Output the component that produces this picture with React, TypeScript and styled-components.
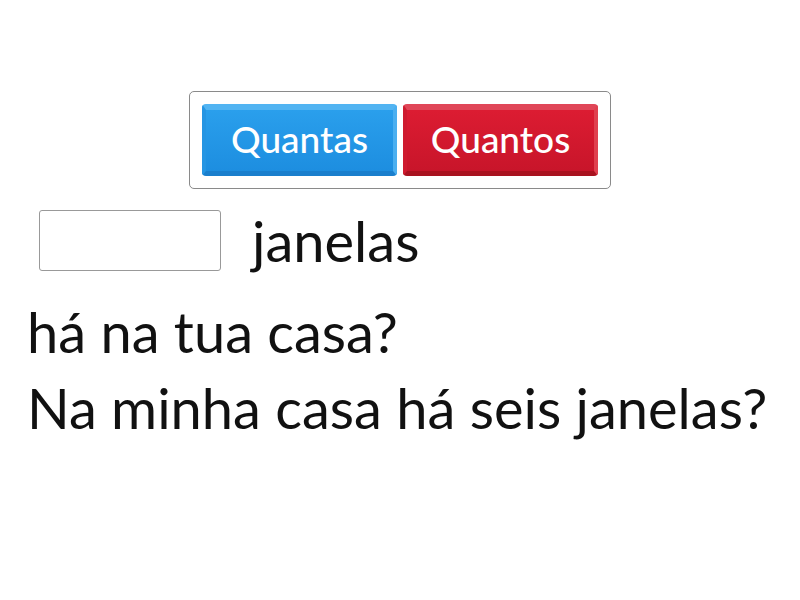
import React from "react";
import styled, { createGlobalStyle } from "styled-components";

const Global = createGlobalStyle`
  html, body { margin: 0; padding: 0; background: #fff; }
  body { font-family: Lato, "Open Sans", sans-serif; color: #111; }
`;

const Page = styled.div`
  width: 800px;
  height: 600px;
  display: flex;
  flex-direction: column;
  padding-top: 91px;
  box-sizing: border-box;
`;

const ChoiceRow = styled.div`
  display: flex;
  justify-content: center;
`;

const ChoiceBox = styled.div`
  display: flex;
  gap: 6px;
  padding: 12px;
  border: 1px solid #8a8a8a;
  border-radius: 5px;
`;

const Choice = styled.div<{ $color: "blue" | "red" }>`
  width: 195px;
  height: 72px;
  box-sizing: border-box;
  display: flex;
  align-items: center;
  justify-content: center;
  padding-bottom: 4px;
  border-radius: 4px;
  color: #fff;
  font-size: 37px;
  font-weight: 500;
  background: ${(p) =>
    p.$color === "blue"
      ? "linear-gradient(#2a9fec, #1d8ee0)"
      : "linear-gradient(#dc1c32, #c8152a)"};
  border-top: 6px solid ${(p) => (p.$color === "blue" ? "#52b4f2" : "#e04658")};
  border-right: 4px solid ${(p) => (p.$color === "blue" ? "#4aaff0" : "#e0404f")};
  border-left: 4px solid ${(p) => (p.$color === "blue" ? "#2595e3" : "#cf1a2f")};
  border-bottom: 5px solid ${(p) => (p.$color === "blue" ? "#1a7fcd" : "#a9121f")};
`;

const Sentence = styled.div`
  padding-left: 39px;
  margin-top: 21px;
  display: flex;
  align-items: center;
  gap: 31px;
  font-size: 56px;
  height: 61px;
`;

const Blank = styled.div`
  width: 182px;
  height: 61px;
  box-sizing: border-box;
  border: 1px solid #999;
  border-radius: 3px;
`;

const Line = styled.div`
  font-size: 56px;
  padding-left: 27px;
  line-height: 76px;
`;

const Lines = styled.div`
  margin-top: 23px;
`;

export default function App() {
  return (
    <Page>
      <Global />
      <ChoiceRow>
        <ChoiceBox>
          <Choice $color="blue">Quantas</Choice>
          <Choice $color="red">Quantos</Choice>
        </ChoiceBox>
      </ChoiceRow>
      <Sentence>
        <Blank />
        <span>janelas</span>
      </Sentence>
      <Lines>
        <Line>há na tua casa?</Line>
        <Line>Na minha casa há seis janelas?</Line>
      </Lines>
    </Page>
  );
}
